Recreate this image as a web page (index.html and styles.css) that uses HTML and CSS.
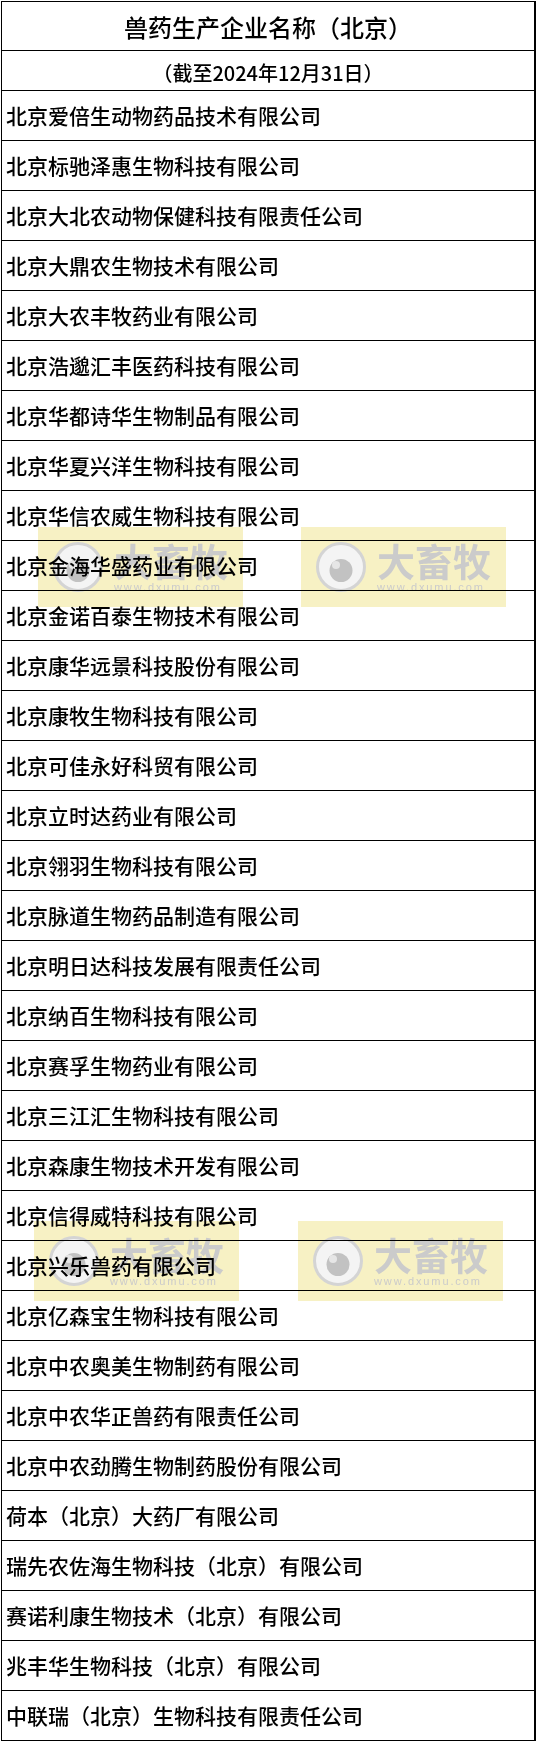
FILE: index.html
```html
<!DOCTYPE html>
<html lang="zh-CN">
<head>
<meta charset="utf-8">
<title>兽药生产企业名称（北京）</title>
<link rel="stylesheet" href="styles.css">
</head>
<body>
<div class="sheet">
  <div class="row title">兽药生产企业名称（北京）</div>
  <div class="row subtitle">（截至2024年12月31日）</div>
  <div class="row">北京爱倍生动物药品技术有限公司</div>
  <div class="row">北京标驰泽惠生物科技有限公司</div>
  <div class="row">北京大北农动物保健科技有限责任公司</div>
  <div class="row">北京大鼎农生物技术有限公司</div>
  <div class="row">北京大农丰牧药业有限公司</div>
  <div class="row">北京浩邈汇丰医药科技有限公司</div>
  <div class="row">北京华都诗华生物制品有限公司</div>
  <div class="row">北京华夏兴洋生物科技有限公司</div>
  <div class="row">北京华信农威生物科技有限公司</div>
  <div class="row">北京金海华盛药业有限公司</div>
  <div class="row">北京金诺百泰生物技术有限公司</div>
  <div class="row">北京康华远景科技股份有限公司</div>
  <div class="row">北京康牧生物科技有限公司</div>
  <div class="row">北京可佳永好科贸有限公司</div>
  <div class="row">北京立时达药业有限公司</div>
  <div class="row">北京翎羽生物科技有限公司</div>
  <div class="row">北京脉道生物药品制造有限公司</div>
  <div class="row">北京明日达科技发展有限责任公司</div>
  <div class="row">北京纳百生物科技有限公司</div>
  <div class="row">北京赛孚生物药业有限公司</div>
  <div class="row">北京三江汇生物科技有限公司</div>
  <div class="row">北京森康生物技术开发有限公司</div>
  <div class="row">北京信得威特科技有限公司</div>
  <div class="row">北京兴乐兽药有限公司</div>
  <div class="row">北京亿森宝生物科技有限公司</div>
  <div class="row">北京中农奥美生物制药有限公司</div>
  <div class="row">北京中农华正兽药有限责任公司</div>
  <div class="row">北京中农劲腾生物制药股份有限公司</div>
  <div class="row">荷本（北京）大药厂有限公司</div>
  <div class="row">瑞先农佐海生物科技（北京）有限公司</div>
  <div class="row">赛诺利康生物技术（北京）有限公司</div>
  <div class="row">兆丰华生物科技（北京）有限公司</div>
  <div class="row last">中联瑞（北京）生物科技有限责任公司</div>

  <div class="wm wm-a1">
    <svg class="wm-logo" viewBox="0 0 52 52" width="52" height="52"><circle cx="26" cy="26" r="23.5" fill="#f4f4f4" stroke="#d4d4d4" stroke-width="3"/><circle cx="26" cy="29.5" r="11.5" fill="#c2c2c2"/><circle cx="21" cy="24" r="4" fill="#e6e6e6"/></svg>
    <div class="wm-text"><span class="wm-name">大畜牧</span><span class="wm-url">www.dxumu.com</span></div>
  </div>
  <div class="wm wm-a2">
    <svg class="wm-logo" viewBox="0 0 52 52" width="52" height="52"><circle cx="26" cy="26" r="23.5" fill="#f4f4f4" stroke="#d4d4d4" stroke-width="3"/><circle cx="26" cy="29.5" r="11.5" fill="#c2c2c2"/><circle cx="21" cy="24" r="4" fill="#e6e6e6"/></svg>
    <div class="wm-text"><span class="wm-name">大畜牧</span><span class="wm-url">www.dxumu.com</span></div>
  </div>
  <div class="wm wm-b1">
    <svg class="wm-logo" viewBox="0 0 52 52" width="52" height="52"><circle cx="26" cy="26" r="23.5" fill="#f4f4f4" stroke="#d4d4d4" stroke-width="3"/><circle cx="26" cy="29.5" r="11.5" fill="#c2c2c2"/><circle cx="21" cy="24" r="4" fill="#e6e6e6"/></svg>
    <div class="wm-text"><span class="wm-name">大畜牧</span><span class="wm-url">www.dxumu.com</span></div>
  </div>
  <div class="wm wm-b2">
    <svg class="wm-logo" viewBox="0 0 52 52" width="52" height="52"><circle cx="26" cy="26" r="23.5" fill="#f4f4f4" stroke="#d4d4d4" stroke-width="3"/><circle cx="26" cy="29.5" r="11.5" fill="#c2c2c2"/><circle cx="21" cy="24" r="4" fill="#e6e6e6"/></svg>
    <div class="wm-text"><span class="wm-name">大畜牧</span><span class="wm-url">www.dxumu.com</span></div>
  </div>
</div>
</body>
</html>
```

FILE: styles.css
```css
html, body {
  margin: 0;
  padding: 0;
  background: #ffffff;
}

body {
  padding: 1px 0 0 1px;
  font-family: "Noto Sans CJK SC", "Noto Sans", "Liberation Sans", sans-serif;
  color: #000000;
}

.sheet {
  position: relative;
  width: 535px;
  box-sizing: border-box;
  border-left: 1px solid #000;
  border-top: 1px solid #000;
  border-right: 2px solid #000;
  border-bottom: 2px solid #000;
  display: flex;
  flex-direction: column;
  isolation: isolate;
}

.row {
  height: 50px;
  box-sizing: border-box;
  border-bottom: 1px solid #000;
  display: flex;
  align-items: center;
  padding-left: 4px;
  font-size: 21px;
  font-weight: 500;
  line-height: 1;
  white-space: nowrap;
}

.row.title {
  height: 49px;
  justify-content: center;
  padding-left: 0;
  padding-top: 2px;
  font-size: 24px;
}

.row.subtitle {
  height: 40px;
  justify-content: center;
  padding-left: 0;
  padding-top: 5px;
  font-size: 20px;
}

.row.last {
  border-bottom: none;
  height: 49px;
}

.wm {
  position: absolute;
  width: 205px;
  height: 80px;
  background: #f7f1c4;
  mix-blend-mode: multiply;
  display: flex;
  align-items: center;
  box-sizing: border-box;
  padding-left: 14px;
  gap: 10px;
}

.wm-logo {
  flex: none;
}

.wm-text {
  display: flex;
  flex-direction: column;
  align-items: flex-start;
}

.wm-name {
  font-size: 38px;
  font-weight: 700;
  line-height: 38px;
  color: #cbcbcb;
}

.wm-url {
  font-family: "Liberation Sans", "DejaVu Sans", sans-serif;
  font-size: 11px;
  line-height: 12px;
  letter-spacing: 1.9px;
  color: #cbcbcb;
  margin-top: 2px;
}

.wm-a1 { left: 36px; top: 525px; }
.wm-a2 { left: 299px; top: 525px; }
.wm-b1 { left: 32px; top: 1219px; }
.wm-b2 { left: 296px; top: 1219px; }
```
